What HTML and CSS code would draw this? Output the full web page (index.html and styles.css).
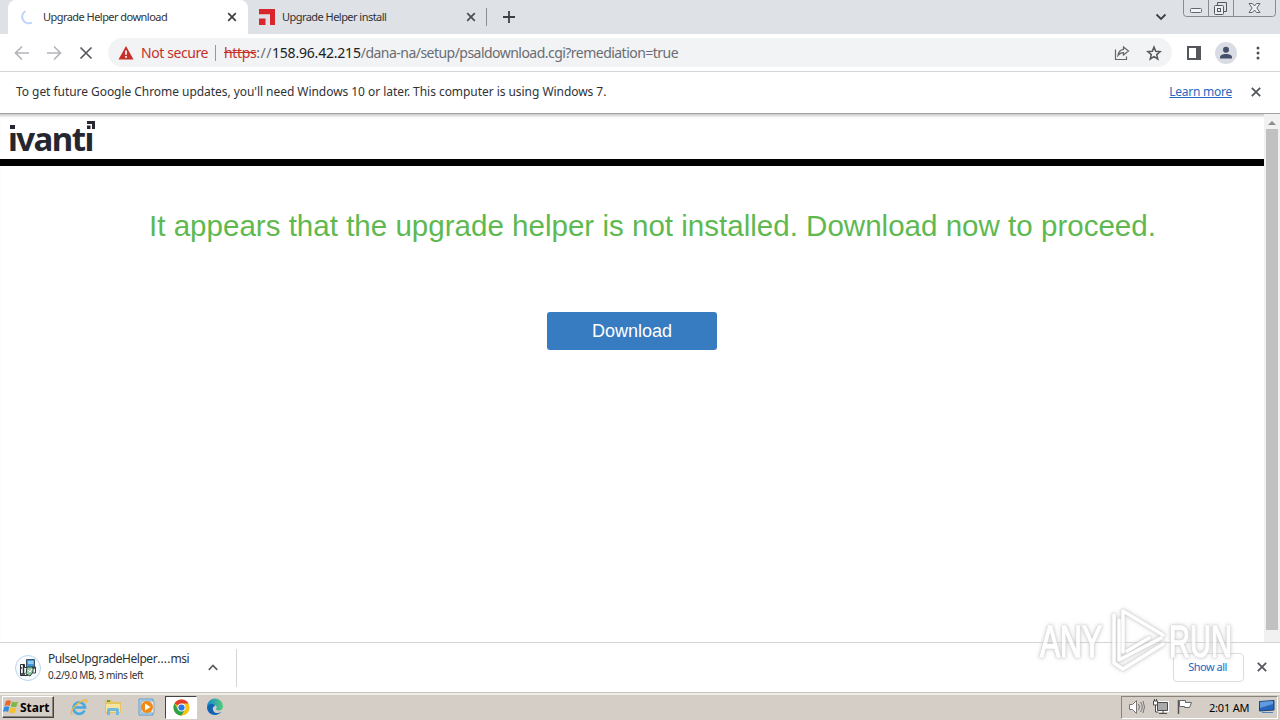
FILE: index.html
```html
<!DOCTYPE html>
<html lang="en">
<head>
<meta charset="utf-8">
<title>Upgrade Helper download</title>
<link rel="stylesheet" href="styles.css">
</head>
<body>
<div class="screen">
  <header class="tabstrip">
    <div class="tab tab-active">
      <svg class="spinner" width="16" height="16" viewBox="0 0 16 16"><path d="M5.500 2A6.500 6.500 0 0 0 12 13.500" fill="none" stroke="#bdd5f8" stroke-width="2"/></svg>
      <span class="tab-title">Upgrade Helper download</span>
      <svg class="tab-close" width="10" height="10" viewBox="0 0 10 10"><path d="M1.200 1.200l7.600 7.600M8.800 1.200L1.200 8.800" stroke="#3c4043" stroke-width="1.700"/></svg>
    </div>
    <div class="tab tab-idle">
      <svg width="16" height="16" viewBox="0 0 16 16"><path fill="#d9252c" d="M0 0h16v16h-5V5.200H0zM0 9.500h6.500V16H0z"/></svg>
      <span class="tab-title">Upgrade Helper install</span>
      <svg class="tab-close" width="10" height="10" viewBox="0 0 10 10"><path d="M1.200 1.200l7.600 7.600M8.800 1.200L1.200 8.800" stroke="#4a4e54" stroke-width="1.700"/></svg>
    </div>
    <svg class="new-tab" width="12" height="12" viewBox="0 0 12 12"><path d="M6 0v12M0 6h12" stroke="#3c4043" stroke-width="1.800"/></svg>
    <svg class="tab-search" width="12" height="8" viewBox="0 0 12 8"><path d="M1.500 1.500L6 6l4.500-4.500" fill="none" stroke="#3c4043" stroke-width="1.800"/></svg>
    <svg class="window-buttons" width="93" height="18" viewBox="0 0 93 18" fill="none" stroke="#878b92"><path d="M.5 0v13.500q0 3 3 3h86q3 0 3-3V0M25.500 0v16M50.500 0v16"/><rect x="7.500" y="8.500" width="11" height="4" rx="1" stroke="#62666d" fill="#f3f4f6"/><path d="M34.500 5V2.500h9v9h-3" stroke="#555960"/><rect x="31.500" y="5.500" width="9" height="9" rx="1" stroke="#555960" fill="#eceef1"/><rect x="34.500" y="8.500" width="3" height="3" stroke="#555960"/><path d="M66 3.500h3.500l2 2.500 2-2.500H77L73.800 8l3.200 4.500h-3.500l-2-2.500-2 2.500H66L69.200 8z" stroke="#62666d" fill="#f0f1f3"/></svg>
  </header>

  <nav class="toolbar">
    <svg class="nav-icon" width="16" height="16" viewBox="0 0 16 16"><path d="M15 8H2M8 1.500L1.500 8 8 14.500" fill="none" stroke="#b2b5b9" stroke-width="1.700"/></svg>
    <svg class="nav-icon" width="16" height="16" viewBox="0 0 16 16"><path d="M1 8h13M8 1.500L14.500 8 8 14.500" fill="none" stroke="#b2b5b9" stroke-width="1.700"/></svg>
    <svg class="nav-icon nav-stop" width="14" height="14" viewBox="0 0 14 14"><path d="M1.500 1.500l11 11M12.500 1.500l-11 11" stroke="#56595e" stroke-width="1.700"/></svg>
    <div class="omnibox">
      <svg width="16" height="14" viewBox="0 0 16 14"><path d="M8 0l7.500 13.500H.5z" fill="#c5302b"/><path d="M8 4.500v4.200M8 10v1.800" stroke="#fff" stroke-width="1.700"/></svg>
      <span class="insecure">Not secure</span>
      <span class="omni-rule"></span>
      <span class="url"><s>https</s><i>://</i><b>158.96.42.215</b>/dana-na/setup/psaldownload.cgi?remediation=true</span>
      <svg class="share" width="16" height="16" viewBox="0 0 16 16" fill="none" stroke="#62656a" stroke-width="1.200"><path d="M1.500 4.500v10h11v-3M9.500 2L14.500 6l-5 4V7.700C7 7.700 5.300 8.700 4 10.500 4.400 7 6.200 4.700 9.500 4.300z"/></svg>
      <svg class="star" width="16" height="16" viewBox="0 0 16 16"><path d="M8 2l1.700 4.200 4.500.4-3.500 3 1.100 4.400L8 11.600 4.200 14l1.100-4.400-3.500-3 4.500-.4z" fill="none" stroke="#56595e" stroke-width="1.500"/></svg>
    </div>
    <svg class="side-panel" width="14" height="14" viewBox="0 0 14 14"><path d="M1 1h12v12H1z" fill="none" stroke="#54575c" stroke-width="2"/><path d="M9 1h4v12H9z" fill="#54575c"/></svg>
    <svg class="avatar" width="22" height="22" viewBox="0 0 22 22"><circle cx="11" cy="11" r="11" fill="#d9dde3"/><circle cx="11" cy="7.700" r="3" fill="#44506b"/><path d="M5 16.500v-1.300c0-4.300 12-4.300 12 0v1.300z" fill="#44506b"/></svg>
    <svg class="kebab" width="4" height="14" viewBox="0 0 4 14" fill="#505358"><circle cx="2" cy="2" r="1.500"/><circle cx="2" cy="7" r="1.500"/><circle cx="2" cy="12" r="1.500"/></svg>
  </nav>

  <aside class="infobar">
    <span class="notice">To get future Google Chrome updates, you'll need Windows 10 or later. This computer is using Windows 7.</span>
    <a class="learn">Learn more</a>
    <svg width="10" height="10" viewBox="0 0 10 10"><path d="M.8.8l8.400 8.400M9.200.8L.8 9.200" stroke="#54575c" stroke-width="1.800"/></svg>
  </aside>

  <div class="viewport">
    <main class="page">
      <div class="brand">
        <span class="brand-name">ıvantı</span>
        <svg class="brand-dots" width="88" height="12" viewBox="0 0 88 12" fill="#262630"><path d="M1 4h5v4H1zM78 0h8v8h-3V3h-5zM78 4.500h3.500V8H78z"/></svg>
      </div>
      <h1 class="message">It appears that the upgrade helper is not installed. Download now to proceed.</h1>
      <button class="download">Download</button>
    </main>
    <div class="scrollbar">
      <svg width="8" height="5" viewBox="0 0 8 5"><path d="M0 5l4-4 4 4z" fill="#8b8b8b"/></svg>
      <span class="thumb"></span>
    </div>
  </div>

  <section class="shelf">
    <svg class="file-icon" width="28" height="28" viewBox="0 0 28 28"><circle cx="14" cy="14" r="12.500" fill="#f8fbfe" stroke="#bad2ed"/><path d="M12.500 5.500h8v9h-8z" fill="#3f97dc" stroke="#41525f"/><path d="M14 7h5.500v3H14z" fill="#8ccdf3"/><path d="M6.500 10.500h4v3h3v8h-7z" fill="#fff" stroke="#252d32"/><path d="M9.500 11v9M6 14h2M6 20h5" stroke="#252d32" stroke-width="1.500"/><path d="M13 13h6v5l-3 4-4-2z" fill="#9ac9a9" stroke="#234638"/><path d="M14 16l2 2 2-3" fill="none" stroke="#fff"/><path d="M18 13h3.500v6h-3" fill="none" stroke="#353d42"/></svg>
    <div class="file">
      <span class="file-name">PulseUpgradeHelper<i>....</i>msi</span>
      <span class="file-state">0.2/9.0 MB, 3 mins left</span>
    </div>
    <svg class="chevron" width="10" height="7" viewBox="0 0 10 7"><path d="M.8 5.800L5 1.500l4.200 4.300" fill="none" stroke="#5a5d61" stroke-width="1.700"/></svg>
    <span class="shelf-rule"></span>
    <button class="show-all">Show all</button>
    <svg class="shelf-close" width="10" height="10" viewBox="0 0 10 10"><path d="M.8.8l8.400 8.400M9.200.8L.8 9.200" stroke="#54575c" stroke-width="1.800"/></svg>
  </section>

  <footer class="taskbar">
    <div class="start">
      <svg width="17" height="16" viewBox="0 0 17 16"><path d="M3 2q3-1.500 5 0L6.700 7Q4.500 5.500 1.500 7z" fill="#ed662d"/><path d="M9 2.500q3 1.500 6 0L13.500 7.500q-3 1.500-5.700 0z" fill="#80b843"/><path d="M1.200 8Q4 6.500 6.500 8L5 13q-2-1.500-5 0z" fill="#348ddc"/><path d="M7.500 8.500q3 1.500 6 0L12 13.500q-3 1.500-6 0z" fill="#f7bf2e"/></svg>
      <span>Start</span>
    </div>
    <div class="apps">
      <span class="app"><svg width="18" height="18" viewBox="0 0 18 18"><path d="M14.500 12.500A5.800 5.800 0 1 1 15 9.500H5" fill="none" stroke="#45a9e2" stroke-width="2.600"/><path d="M2.500 16C-2 16 6 4 15 2q3-.5 1 3" fill="none" stroke="#e9b944" stroke-width="1.300"/></svg></span>
      <span class="app"><svg width="18" height="18" viewBox="0 0 18 18"><path d="M1 3l2-1h5l1 2h8v11H1z" fill="#e6c45f"/><path d="M2 6h14v8H2z" fill="#f7e3a0"/><path d="M3 17v-5q0-2 2-2h8q2 0 2 2v5h-3v-4H6v4z" fill="#70b9dd"/><path d="M3 3h3" stroke="#54aa54" stroke-width="2"/></svg></span>
      <span class="app"><svg width="18" height="18" viewBox="0 0 18 18"><path d="M1 1h14v16H1z" fill="#b9ddf3" stroke="#609dc6"/><path d="M3 3h13v12H3z" fill="#e6eef3" stroke="#81a9c3"/><circle cx="9" cy="9" r="6" fill="#f18a15"/><path d="M7 5.500l5.500 3.500L7 12.500z" fill="#fff"/></svg></span>
      <span class="app app-current"><svg width="17" height="17" viewBox="0 0 18 18"><circle cx="9" cy="9" r="8.500" fill="#fbc116"/><path d="M9 9L1.600 4.800A8.500 8.500 0 0 1 16.400 4.800H9z" fill="#e33b2e"/><path d="M1.600 4.800A8.500 8.500 0 0 0 9 17.500L12.700 11 9 9 5.300 11z" fill="#2da24c"/><circle cx="9" cy="9" r="4.200" fill="#fff"/><circle cx="9" cy="9" r="3.300" fill="#2c77e5"/></svg></span>
      <span class="app"><svg width="18" height="18" viewBox="0 0 18 18"><defs><linearGradient id="edge"><stop stop-color="#168bd2"/><stop offset="1" stop-color="#57ca79"/></linearGradient></defs><path d="M1 9a8 8 0 0 1 16-1c.3 3-2 4.500-4.500 4.500-2 0-3-1-2-2.500C12 7 5 5 1 9z" fill="url(#edge)"/><path d="M1 9c2-4 7-4 8-1-4 1-2 7 2 7 2 0 3-.5 4.500-1.500C12 19 1 18 1 9z" fill="#1265b5"/></svg></span>
    </div>
    <div class="tray">
      <svg width="18" height="16" viewBox="0 0 18 16" fill="none" stroke="#777" stroke-width="1"><path d="M1.500 5.500h3l4-4v13l-4-4h-3z" fill="#fff"/><path d="M10.500 5q2 3 0 6M12.500 3q3.500 5 0 10M15 2q3 6 0 12"/></svg>
      <svg class="net" width="17" height="16" viewBox="0 0 17 16" fill="none" stroke="#4b4b4b"><path d="M5.500 3.500h10v8h-10z" fill="#aaa" stroke="#fff" stroke-width="3"/><path d="M5.500 3.500h10v8h-10z" fill="#aaa"/><path d="M7 14.500h8M11 12v2M3.500 6v7h3M2.500 0v2M4.500 0v2"/><path d="M1.500 2v4h4V2z" fill="#fff"/></svg>
      <svg class="flag" width="17" height="16" viewBox="0 0 17 16"><path d="M2.500 1v14" stroke="#555" stroke-width="1.500"/><path d="M3.500 1.500h6v2h6l-2 5h-5v-1h-5z" fill="#fff" stroke="#666"/></svg>
      <span class="clock">2:01 AM</span>
      <svg class="desktop" width="16" height="14" viewBox="0 0 16 14"><path d="M.5 1.500L15 .5v9.500L.5 11z" fill="#2766b8" stroke="#164480"/><path d="M1 2l13-1v3L1 8z" fill="#609be0"/><path d="M3 12.500h11" stroke="#5481b8"/></svg>
    </div>
  </footer>

  <div class="watermark">
    <svg width="210" height="76" viewBox="0 0 210 76">
      <g fill="none" stroke="#fff" stroke-width="3.500" stroke-linejoin="round" stroke-linecap="round">
        <path d="M79 13v48l9 6 40-25M88 50V9l40 24M84 18v40l42-22M92 49l22-13"/>
      </g>
      <text x="5" y="55" textLength="62" lengthAdjust="spacingAndGlyphs">ANY</text><text x="134" y="55" textLength="63" lengthAdjust="spacingAndGlyphs">RUN</text></svg>
  </div>
</div>
</body>
</html>
```
FILE: styles.css
```css
* { box-sizing: border-box; }
body { margin: 0; overflow: hidden; font-family: "Noto Sans", "Open Sans", sans-serif; color: #303236; }
svg { display: block; flex: none; }
button { font: inherit; margin: 0; padding: 0; }
.screen { position: relative; width: 1280px; height: 720px; display: flex; flex-direction: column; background: #fff; overflow: hidden; white-space: nowrap; }
.tabstrip { height: 34px; flex: none; display: flex; align-items: center; background: #dee1e6; padding-left: 8px; }
.tab { height: 34px; display: flex; align-items: center; }
.tab-active { width: 240px; background: #fff; border-radius: 8px 8px 0 0; padding: 0 11px; }
.spinner { margin-left: 1px; }
.tab-title { font-size: 11px; line-height: 15px; letter-spacing: -.54px; margin: -1px 0 0 7px; }
.tab-close { margin-left: auto; }
.tab-idle { width: 239px; height: 18px; padding: 0 10px 0 11px; border-right: 1px solid #8b8e94; }
.new-tab { margin-left: 16px; }
.tab-search { margin-left: auto; }
.window-buttons { margin: 0 4px 0 16px; align-self: flex-start; }
.toolbar { height: 38px; flex: none; display: flex; align-items: center; border-bottom: 1px solid #d4d5d7; padding-left: 14px; }
.nav-icon { margin-right: 16px; }
.nav-stop { margin: 0 15px 0 1px; }
.omnibox { display: flex; align-items: center; width: 1064px; height: 29px; border-radius: 15px; background: #f1f3f4; padding: 0 10px; font-size: 14px; letter-spacing: -.41px; }
.insecure { color: #c5302b; margin-left: 7px; width: 67px; }
.omni-rule { width: 1px; height: 16px; background: #95989c; margin: 0 8px 0 7px; }
.url { color: #6a6d72; letter-spacing: -.53px; }
.url s { color: #c5302b; letter-spacing: -.35px; }
.url i { font-style: normal; letter-spacing: .5px; }
.url b { color: #202124; font-weight: 400; letter-spacing: -.2px; }
.share { margin-left: auto; }
.star { margin-left: 16px; }
.side-panel { margin-left: 15px; }
.avatar { margin-left: 14px; }
.kebab { margin-left: 19px; }
.infobar { height: 42px; flex: none; display: flex; align-items: center; padding: 0 19px 2px 16px; border-bottom: 1px solid #a2a2a2; font-size: 12px; }
.notice { letter-spacing: -.05px; }
.learn { margin: 0 19px 0 auto; color: #2a68bf; text-decoration: underline; letter-spacing: -.25px; }
.viewport { height: 528px; flex: none; display: flex; box-shadow: inset 0 4px 3px -2px #c8c8c8; }
.page { width: 1264px; display: flex; flex-direction: column; align-items: center; }
.brand { position: relative; width: 1264px; height: 52px; flex: none; border-bottom: 7px solid #000; padding-left: 8px; }
.brand-name { display: block; font: 700 33px/49px "Noto Sans", sans-serif; letter-spacing: -1.55px; color: #262630; }
.brand-dots { position: absolute; left: 9px; top: 7px; }
.message { margin: 42px 0 0 41px; font: 400 29.55px/36px "Liberation Sans", Arial, sans-serif; color: #60b950; }
.download { width: 170px; height: 38px; margin-top: 68px; border: 0; border-radius: 3px; background: #377bc0; color: #fff; font: 18px "Liberation Sans", Arial, sans-serif; }
.scrollbar { width: 16px; background: #f1f1f1; display: flex; flex-direction: column; align-items: center; padding-top: 6px; }
.thumb { width: 12px; height: 501px; margin-top: 4px; background: #c1c1c1; }
.shelf { height: 50px; flex: none; display: flex; align-items: center; border-top: 1px solid #d4d4d4; padding: 0 13px 0 14px; }
.file { width: 142px; margin-left: 6px; display: flex; flex-direction: column; margin-top: -2px; }
.file-name { font-size: 12px; line-height: 17px; letter-spacing: -.45px; }
.file-name i { font-style: normal; letter-spacing: .1px; }
.file-state { font-size: 10px; line-height: 16px; letter-spacing: -.4px; }
.chevron { margin-left: 18px; }
.shelf-rule { width: 1px; height: 38px; background: #d4d4d4; margin-left: 18px; }
.show-all { width: 71px; height: 29px; margin-left: auto; background: #fff; border: 1px solid #dadce0; border-radius: 4px; color: #1967c5; font-size: 11px; letter-spacing: -.5px; padding: 0 2px 2px 0; margin-top: -1px; }
.shelf-close { margin: -1px 0 0 13px; }
.taskbar { height: 28px; flex: none; display: flex; align-items: center; background: #d5cec7; border-top: 1px solid #c9c5c0; box-shadow: inset 0 2px #f0ede9; padding: 2px 2px 0; }
.start { width: 52px; height: 22px; margin-top: -1px; display: flex; align-items: center; border: 1px solid; border-color: #fff #444 #444 #fff; box-shadow: inset -1px -1px #88837d; font: 700 12px "Noto Sans", sans-serif; color: #000; }
.apps { display: flex; margin: -1px 0 0 8px; }
.app { width: 34px; height: 23px; display: flex; align-items: center; justify-content: center; }
.app-current { width: 32px; margin: 0 1px; background: #fff; border: 1px solid; border-color: #444 #fff #fff #444; }
.tray { width: 157px; height: 23px; margin: -1px 0 0 auto; display: flex; align-items: center; border: 1px solid; border-color: #88837d #fff #fff #88837d; padding-left: 6px; }
.net { margin-left: 6px; }
.flag { margin-left: 7px; }
.clock { margin-left: 16px; font-size: 11px; letter-spacing: -.2px; color: #000; }
.desktop { margin: 0 2px 0 auto; }
.watermark { position: absolute; left: 1035px; top: 602px; pointer-events: none; opacity: .8; filter: drop-shadow(0 0 1px #bbb) drop-shadow(0 0 2px #ccc); }
.watermark svg { overflow: visible; }
.watermark text { font: 400 44px "Liberation Sans", sans-serif; fill: #fff; stroke: #fff; stroke-width: 1.5px; }
```
